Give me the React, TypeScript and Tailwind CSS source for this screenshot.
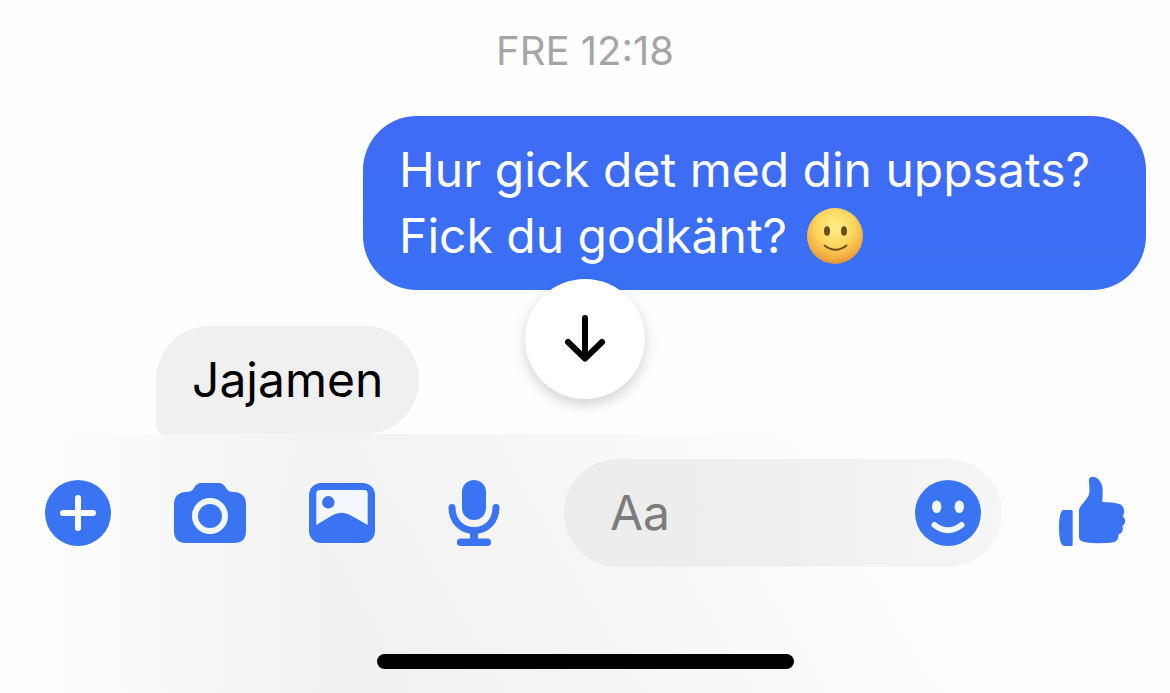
import type { ReactNode } from "react";

function IconButton({ label, children }: { label: string; children: ReactNode }) {
  return (
    <button type="button" aria-label={label} className="size-[72px] shrink-0 text-[#3a74f2]">
      <svg viewBox="0 0 72 72" className="size-full overflow-visible" fill="currentColor" aria-hidden="true">
        {children}
      </svg>
    </button>
  );
}

function SmileEmoji() {
  return (
    <svg viewBox="0 0 56 56" role="img" aria-label="🙂" className="ml-5 size-14 shrink-0">
      <defs>
        <radialGradient id="face" cx="0.5" cy="0.34" r="0.68">
          <stop offset="0" stopColor="#fdee8c" />
          <stop offset="0.5" stopColor="#fbd65c" />
          <stop offset="0.8" stopColor="#f3b043" />
          <stop offset="1" stopColor="#dd8f35" />
        </radialGradient>
      </defs>
      <circle cx="28" cy="28" r="28" fill="url(#face)" />
      <ellipse cx="20" cy="23" rx="3" ry="4.800" fill="#6d4b1c" />
      <ellipse cx="37" cy="23" rx="3" ry="4.800" fill="#6d4b1c" />
      <path d="M17.500 37.500Q28.500 46 39.500 37.500" fill="none" stroke="#6d4b1c" strokeWidth="2" strokeLinecap="round" />
    </svg>
  );
}

function Composer() {
  return (
    <footer className="bg-[linear-gradient(90deg,#fefefe_3%,#fefefe00_28%),linear-gradient(60deg,#f1f1f1_30%,#f6f6f6_50%,#fdfdfd_72%)] pt-[25px] pb-6">
      <div className="flex items-center gap-[54px] px-[42px]">
        <div className="flex gap-[60px]">
          <IconButton label="Mer">
            <circle cx="36" cy="36" r="33" />
            <path d="M36 21V51M21 36H51" stroke="#fff" strokeWidth="6" strokeLinecap="round" />
          </IconButton>
          <IconButton label="Kamera">
            <path d="M12 15C16 15 18 14 20 11C22 7.500 24 6 28 6H44C48 6 50 7.500 52 11C54 14 56 15 60 15C68 15.500 72 20 72 27V54C72 62 68 66 60 66H12C4 66 0 62 0 54V27C0 20 4 15.500 12 15Z" />
            <circle cx="36" cy="39" r="15" fill="none" stroke="#f1f7ff" strokeWidth="6" />
          </IconButton>
          <IconButton label="Bilder">
            <rect x="3" y="6" width="66" height="60" rx="12" />
            <path d="M10.300 16.500C10.300 14 11.500 13 14 13H58C60.500 13 61.700 14 61.700 16.500V48L45 38.500C38 34.800 33 34.800 26 38.500L10.300 48Z" fill="#f3f6fa" />
            <circle cx="22.300" cy="25.300" r="6.200" />
          </IconButton>
          <IconButton label="Röstmeddelande">
            <rect x="24" y="3" width="24" height="40" rx="12" />
            <path d="M14 30.500C14 44 23.500 53.500 36 53.500S58 44 58 30.500" fill="none" stroke="currentColor" strokeWidth="7" strokeLinecap="round" />
            <path d="M32 54H40V63H32Z" />
            <rect x="19" y="61.500" width="34" height="7.500" rx="3.500" />
          </IconButton>
        </div>
        <div className="flex h-[108px] min-w-0 flex-1 items-center rounded-full bg-linear-to-r from-[#ececec] via-[#efefef] to-[#f6f6f6] pr-[18px] pl-[46px]">
          <input
            type="text"
            aria-label="Meddelande"
            placeholder="Aa"
            className="min-w-0 flex-1 bg-transparent text-[48px] leading-[66px] text-black outline-none placeholder:text-[#7c7c7c]"
          />
          <IconButton label="Emoji">
            <circle cx="36" cy="36" r="33" />
            <ellipse cx="24.700" cy="29.700" rx="4.700" ry="6.300" fill="#f1f7ff" />
            <ellipse cx="47.300" cy="29.700" rx="4.700" ry="6.300" fill="#f1f7ff" />
            <path d="M22.500 48Q36 58.500 49.500 48" fill="none" stroke="#f1f7ff" strokeWidth="6" strokeLinecap="round" />
          </IconButton>
        </div>
        <IconButton label="Gilla">
          <path d="M7.500 33H15.500Q16.700 33 16.700 34.500V67.500Q16.700 69 15.500 69H8.500C5 69 3 62 3 51C3 41 4.500 33 7.500 33Z" />
          <path d="M33 3C33 0.500 34.500-0.300 36.300-0.300C42 0 46.700 5 46.700 14C46.700 18.500 46.300 21.500 46.300 25C54 25 59 25.800 64 27.300C68 28.600 69.500 35.500 66.700 39.500C70 41.500 70 46.500 66.300 49C67.800 53 66 56.500 62.300 57.500C63 61.500 61 64.500 57.300 65.300C50 66.700 35 66.500 27.300 64.700C24.500 64 23 62.300 23 59.500V34C23 27.500 33.500 22.500 33.500 14C33.500 10 33 6.500 33 3Z" />
        </IconButton>
      </div>
      <div className="mx-auto mt-[87px] h-[15px] w-[417px] max-w-full rounded-full bg-black" />
    </footer>
  );
}

export default function App() {
  return (
    <div className="flex min-h-screen flex-col bg-[#fefefe] font-['Inter','Liberation_Sans',sans-serif]">
      <main className="relative flex flex-1 flex-col pt-7">
        <time className="text-center text-[40px] leading-[46px] text-[#a5a5a8]">FRE 12:18</time>
        <div className="mt-[42px] mr-6 w-fit self-end rounded-[54px] bg-linear-to-b from-[#406af5] to-[#3971f5] py-[21px] pr-14 pl-9 text-[48px] leading-[66px] text-white">
          <p>Hur gick det med din uppsats?</p>
          <p className="flex items-center">
            Fick du godkänt?
            <SmileEmoji />
          </p>
        </div>
        <div className="mt-9 ml-[156px] w-fit self-start rounded-[54px] rounded-bl-lg bg-[#f0f0f0] px-9 py-[21px] text-[48px] leading-[66px] text-black">
          <p>Jajamen</p>
        </div>
        <div className="absolute inset-x-0 bottom-[35px] flex justify-center">
          <button
            type="button"
            aria-label="Till senaste meddelandet"
            className="flex size-[120px] items-center justify-center rounded-full bg-white shadow-[0_5px_14px_rgba(0,0,0,0.18)]"
          >
            <svg viewBox="0 0 48 48" className="size-12" fill="none" stroke="#000" strokeWidth="6" strokeLinecap="round" strokeLinejoin="round" aria-hidden="true">
              <path d="M24 3V43M7 27L24 43.500L41 27" />
            </svg>
          </button>
        </div>
      </main>
      <Composer />
    </div>
  );
}
